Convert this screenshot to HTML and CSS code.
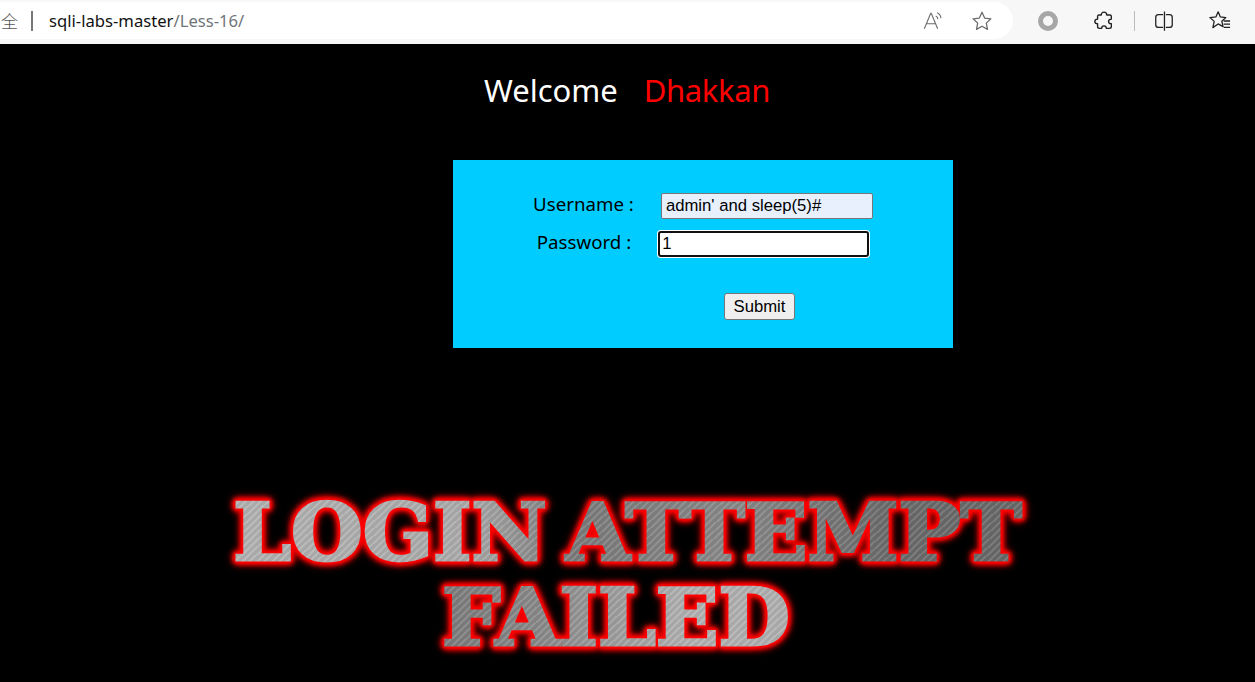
FILE: index.html
```html
<!DOCTYPE html>
<html lang="en">
<head>
  <meta charset="UTF-8" />
  <meta name="viewport" content="width=device-width, initial-scale=1.0" />
  <title>Less-16</title>
  <link rel="stylesheet" href="styles.css">
</head>
<body>
  <header class="toolbar">
    <div class="address-bar">
      <span class="secure-mark">全</span>
      <span class="divider"></span>
      <span class="url">sqli-labs-master<span class="url-path">/Less-16/</span></span>
      <div class="address-actions">
        <svg class="icon" viewBox="0 0 24 24" fill="none" stroke="#6b6b6b" stroke-width="1.2">
          <path d="M2.5 20.5 9.500 3.500h.6l7 17M5 15h10" />
          <path d="M15 6.500c1.300.6 2.200 1.800 2.400 3.400M16.500 3c2.400 1 3.900 3.200 4.200 6" />
        </svg>
        <svg class="icon" viewBox="0 0 24 24" fill="none" stroke="#6b6b6b" stroke-width="1.4" stroke-linejoin="round">
          <path d="M12 2.500l2.900 6.300 6.800.8-5 4.700 1.300 6.800-6-3.400-6 3.400 1.300-6.800-5-4.700 6.800-.8z" />
        </svg>
      </div>
    </div>
    <div class="browser-actions">
      <span class="record-dot"></span>
      <svg class="icon puzzle" viewBox="0 0 24 24" fill="none" stroke="#222" stroke-width="1.5" stroke-linejoin="round">
        <path d="M9 5.500c0-2 1.300-3.200 3-3.200s3 1.200 3 3.200h3.500a1.500 1.500 0 0 1 1.500 1.500v3c-2 0-3 1-3 2.500s1 2.500 3 2.500v3a2 2 0 0 1-2 2h-3.500c0-1.600-1-2.700-2.500-2.700s-2.500 1.100-2.500 2.700H7a2 2 0 0 1-2-2v-3c-2 0-3-1-3-2.500s1-2.500 3-2.500V7a1.500 1.500 0 0 1 1.500-1.500z" />
      </svg>
      <span class="divider light"></span>
      <svg class="icon split" viewBox="0 0 24 24" fill="none" stroke="#222" stroke-width="1.4">
        <path d="M11 5H6a3 3 0 0 0-3 3v8a3 3 0 0 0 3 3h5M14 5h4a3 3 0 0 1 3 3v8a3 3 0 0 1-3 3h-4M12.500 1.500v21" />
      </svg>
      <svg class="icon favs" viewBox="0 0 24 24" fill="none" stroke="#222" stroke-width="1.4" stroke-linejoin="round">
        <path d="M10 2l2.400 5.600 6 .6-4.400 4 1.300 6-5.300-3-5.800 4 1.500-6.800L1 8.200l6.500-.6z" />
        <path d="M16 12h7M16 15.500h7M16 19h7" />
      </svg>
    </div>
  </header>

  <main>
    <h1 class="welcome">Welcome <span class="name">Dhakkan</span></h1>

    <form class="login-panel">
      <div class="field">
        <label for="uname">Username :</label>
        <input class="filled" id="uname" type="text" value="admin' and sleep(5)#">
      </div>
      <div class="field">
        <label for="passwd">Password :</label>
        <input class="focused" id="passwd" type="text" value="1">
      </div>
      <div class="submit-row">
        <button type="button">Submit</button>
      </div>
    </form>

    <div class="failed">
      <div class="failed-line first">LOGIN ATTEMPT</div>
      <div class="failed-line second">FAILED</div>
    </div>
  </main>
</body>
</html>
```

FILE: styles.css
```css
body {
  margin: 0;
  background-color: #000;
  font-family: "Noto Sans", sans-serif;
  overflow: hidden;
}

/* browser chrome */
.toolbar {
  display: flex;
  align-items: center;
  height: 44px;
  padding-top: 2px;
  padding-bottom: 5px;
  box-sizing: border-box;
  margin-bottom: 1px;
  background-color: #f7f7f7;
}

.address-bar {
  display: flex;
  align-items: center;
  width: 1013px;
  height: 37px;
  background-color: #fff;
  border-radius: 0 19px 19px 0;
}

.secure-mark {
  width: 18px;
  margin-left: 1px;
  font-family: "Noto Sans CJK SC", sans-serif;
  font-size: 17px;
  font-weight: 300;
  color: #555;
}

.divider {
  width: 2px;
  height: 20px;
  margin-left: 12px;
  background-color: #777;
}

.url {
  margin-left: 16px;
  font-size: 16.65px;
  color: #111;
}

.url-path {
  color: #70757a;
}

.address-actions {
  display: flex;
  gap: 27px;
  margin-left: auto;
  margin-right: 20px;
}

.icon {
  display: block;
  width: 22px;
  height: 22px;
}

.browser-actions {
  display: flex;
  align-items: center;
  margin-left: 25px;
}

.record-dot {
  width: 20px;
  height: 20px;
  box-sizing: border-box;
  border: 5px solid #a6a6a6;
  border-radius: 50%;
  background-color: #f7f7f7;
}

.puzzle {
  margin-left: 35px;
}

.divider.light {
  width: 1px;
  margin-left: 19px;
  background-color: #bbb;
}

.split {
  margin-left: 18px;
}

.favs {
  margin-left: 34px;
}

/* page */
.welcome {
  margin: 0 0 0 484px;
  padding-top: 23px;
  font-size: 31px;
  font-weight: 400;
  line-height: 44px;
  color: #fff;
  word-spacing: 18px;
}

.name {
  letter-spacing: -0.4px;
  color: #f00;
}

.login-panel {
  width: 500px;
  height: 188px;
  box-sizing: border-box;
  margin: 48px 0 0 453px;
  padding-top: 33px;
  background-color: #0cf;
}

.field {
  display: flex;
  justify-content: center;
  align-items: center;
  gap: 27px;
  margin-bottom: 12px;
  font-size: 18.7px;
  color: #000;
}

.field label {
  line-height: 22px;
  padding-bottom: 4px;
}

.field input {
  width: 212px;
  height: 26px;
  box-sizing: border-box;
  padding: 1px 4px;
  border: 1px solid #767676;
  border-radius: 2px;
  font-family: "Liberation Sans", Arial, sans-serif;
  font-size: 16.7px;
  color: #000;
}

.field input.filled {
  background-color: #e8f0fe;
}

.field input.focused {
  width: 211px;
  padding: 1px 2px;
  border: 2px solid #101010;
  border-radius: 3px;
  box-shadow: 0 0 0 1px #fff;
  background-color: #fff;
}

.submit-row {
  display: flex;
  justify-content: flex-start;
  margin-top: 36px;
  padding-left: 271px;
}

.submit-row button {
  width: 71px;
  height: 27px;
  padding: 0;
  border: 1px solid #767676;
  border-radius: 3px;
  background-color: #efefef;
  font-family: "Liberation Sans", Arial, sans-serif;
  font-size: 16.7px;
  color: #000;
}

/* the failed banner */
.failed {
  margin-top: 142px;
  text-align: center;
  font-family: "DejaVu Serif", serif;
  font-size: 78px;
  font-weight: 700;
  line-height: 85px;
  word-spacing: -9px;
  transform: scaleX(1.055);
  filter: drop-shadow(0 0 1px #f00) drop-shadow(0 0 1px #f00) drop-shadow(0 0 2px #f00) drop-shadow(0 0 2px #f00) drop-shadow(0 0 3px #e00);
}

.failed-line {
  color: transparent;
  -webkit-text-stroke: 3px transparent;
  -webkit-background-clip: text;
  background-clip: text;
}

.failed-line.first {
  background-image:
    repeating-linear-gradient(135deg, rgba(255, 255, 255, 0.1) 0 2px, rgba(0, 0, 0, 0.05) 2px 5px),
    linear-gradient(90deg, #b4b4b4 20%, #acacac 38%, #7c7c7c 46%, #8a8a8a 58%, #6c6c6c 70%, #6a6a6a 82%);
}

.failed-line.second {
  margin-right: 22px;
  background-image:
    repeating-linear-gradient(135deg, rgba(255, 255, 255, 0.1) 0 2px, rgba(0, 0, 0, 0.05) 2px 5px),
    linear-gradient(90deg, #7c7c7c 36%, #8a8a8a 44%, #a0a0a0 50%, #b4b4b4 56%, #b0b0b0 64%);
}
```
